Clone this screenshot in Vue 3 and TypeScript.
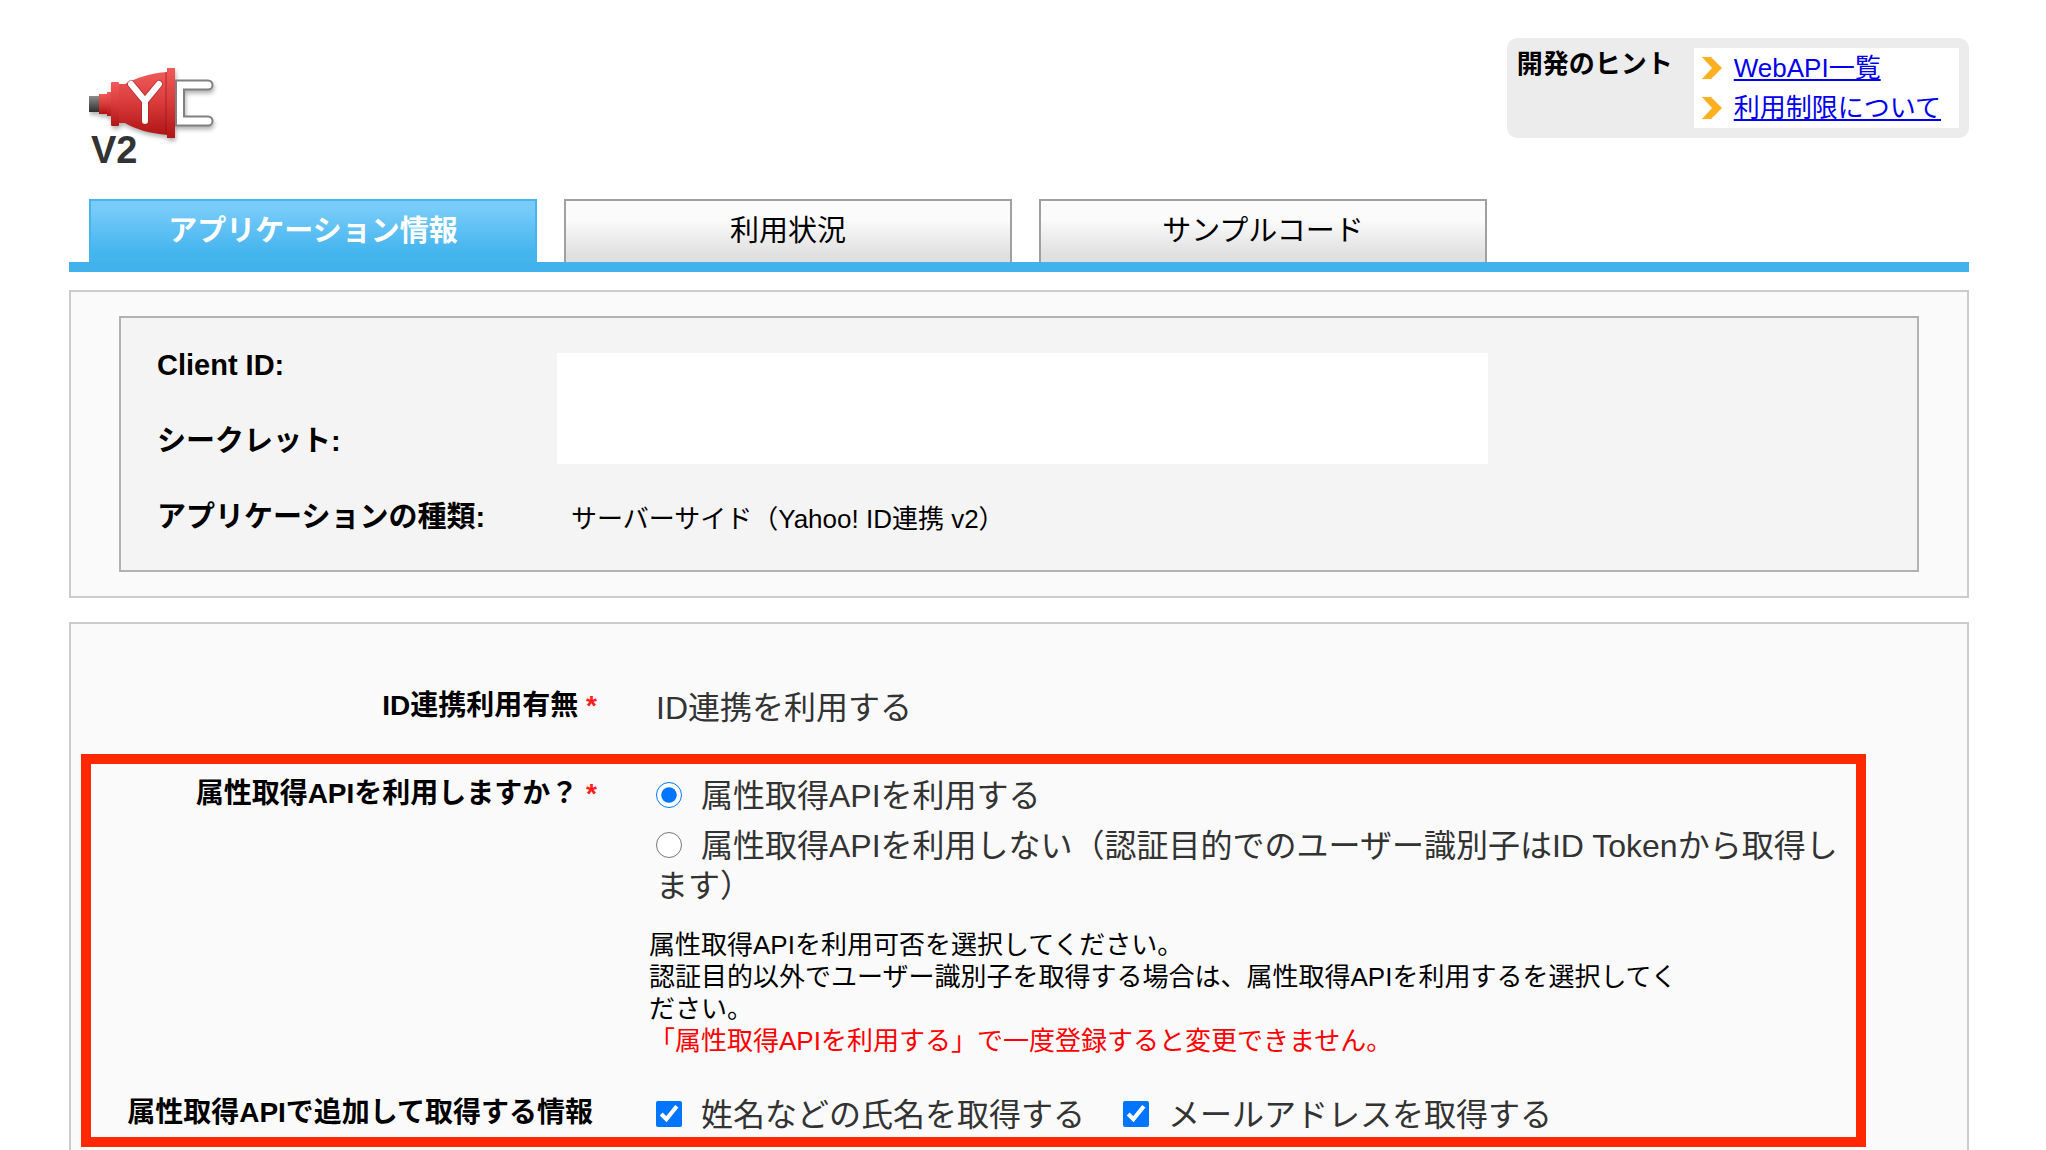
<script setup lang="ts">
import { ref } from 'vue'

interface Tab {
  label: string
  href: string
  active: boolean
}

interface Hint {
  label: string
  href: string
}

const hints: Hint[] = [
  { label: 'WebAPI一覧', href: '#webapi' },
  { label: '利用制限について', href: '#limits' },
]

const tabs: Tab[] = [
  { label: 'アプリケーション情報', href: '#info', active: true },
  { label: '利用状況', href: '#usage', active: false },
  { label: 'サンプルコード', href: '#sample', active: false },
]

const useAttributeApi = ref<'yes' | 'no'>('yes')
const fetchName = ref(true)
const fetchMail = ref(true)
</script>

<template>
  <div class="page">
    <header class="header">
      <svg class="logo" viewBox="0 0 130 105" role="img" aria-label="Yahoo! ID連携 V2">
        <defs>
          <linearGradient id="plugRed" x1="0" y1="0" x2="0" y2="1">
            <stop offset="0" stop-color="#f05a5a" />
            <stop offset="0.5" stop-color="#d83a3a" />
            <stop offset="1" stop-color="#b01414" />
          </linearGradient>
          <linearGradient id="cableGray" x1="0" y1="0" x2="0" y2="1">
            <stop offset="0" stop-color="#8c8c8c" />
            <stop offset="1" stop-color="#2e2e2e" />
          </linearGradient>
        </defs>
        <g class="plug">
          <rect x="0" y="30" width="11" height="16" fill="url(#cableGray)" />
          <rect x="10" y="28" width="9" height="20" fill="url(#plugRed)" />
          <rect x="18" y="26" width="5" height="24" fill="url(#plugRed)" />
          <path d="M29 18H36C48 12 60 7 79 6V69C60 67 48 64 36 57H29Z" fill="url(#plugRed)" />
          <rect x="22" y="16" width="8" height="44" rx="1" fill="url(#plugRed)" />
          <rect x="76" y="6" width="2" height="62" fill="#9c1010" opacity="0.35" />
          <rect x="78" y="2" width="8" height="70" fill="url(#plugRed)" />
          <path
            d="M87 14.5H119A4.5 4.5 0 0 1 119 23.5H95V50.5H119A4.5 4.5 0 0 1 119 59.5H87Z"
            fill="#fff"
            stroke="#808080"
            stroke-width="2"
          />
        </g>
        <path
          d="M42 18L56 35L70 18M56 35V55"
          fill="none"
          stroke="#a02020"
          stroke-width="8"
          stroke-linecap="round"
          stroke-linejoin="round"
          opacity="0.5"
        />
        <path
          d="M42 18L56 35L70 18M56 35V55"
          fill="none"
          stroke="#fff"
          stroke-width="6"
          stroke-linecap="round"
          stroke-linejoin="round"
        />
        <text class="version" x="2" y="97">V2</text>
      </svg>

      <aside class="hints">
        <h2 class="hints-title">開発のヒント</h2>
        <ul class="hints-list">
          <li v-for="hint in hints" :key="hint.href">
            <svg class="chevron" viewBox="0 0 20 22" aria-hidden="true">
              <path d="M0 0H9L20 11L9 22H0L10 11Z" fill="#ffb020" />
            </svg>
            <a :href="hint.href">{{ hint.label }}</a>
          </li>
        </ul>
      </aside>
    </header>

    <nav class="tabs">
      <a
        v-for="tab in tabs"
        :key="tab.href"
        class="tab"
        :class="{ active: tab.active }"
        :href="tab.href"
        >{{ tab.label }}</a
      >
    </nav>

    <section class="panel credentials-panel">
      <dl class="credentials">
        <dt>Client ID:</dt>
        <dt>シークレット:</dt>
        <dd class="secret"></dd>
        <dt>アプリケーションの種類:</dt>
        <dd class="kind">サーバーサイド（Yahoo! ID連携 v2）</dd>
      </dl>
    </section>

    <form class="panel settings" @submit.prevent>
      <div class="row intro">
        <div class="label">ID連携利用有無 <span class="required">*</span></div>
        <div class="field">ID連携を利用する</div>
      </div>

      <div class="highlight">
        <div class="row" role="radiogroup" aria-labelledby="attribute-label">
          <div id="attribute-label" class="label">
            属性取得APIを利用しますか？ <span class="required">*</span>
          </div>
          <div>
            <div class="field options">
              <div>
                <input id="use-yes" v-model="useAttributeApi" type="radio" name="use" value="yes" />
                <label for="use-yes">属性取得APIを利用する</label>
              </div>
              <div>
                <input id="use-no" v-model="useAttributeApi" type="radio" name="use" value="no" />
                <label for="use-no"
                  >属性取得APIを利用しない（認証目的でのユーザー識別子はID Tokenから取得します）</label
                >
              </div>
            </div>
            <p class="help">
              属性取得APIを利用可否を選択してください。<br />認証目的以外でユーザー識別子を取得する場合は、属性取得APIを利用するを選択してください。<br /><span
                class="warning"
                >「属性取得APIを利用する」で一度登録すると変更できません。</span
              >
            </p>
          </div>
        </div>

        <div class="row" role="group" aria-labelledby="extra-label">
          <div id="extra-label" class="label optional">属性取得APIで追加して取得する情報</div>
          <div class="field checks">
            <div>
              <input id="fetch-name" v-model="fetchName" type="checkbox" />
              <label for="fetch-name">姓名などの氏名を取得する</label>
            </div>
            <div>
              <input id="fetch-mail" v-model="fetchMail" type="checkbox" />
              <label for="fetch-mail">メールアドレスを取得する</label>
            </div>
          </div>
        </div>
      </div>
    </form>
  </div>
</template>

<style>
body {
  margin: 0;
  background: #fff;
}
</style>

<style scoped>
.page {
  box-sizing: border-box;
  display: flex;
  flex-direction: column;
  min-height: 100vh;
  padding: 38px 77px 0 69px;
  color: #000;
  font-family: "Liberation Sans", "Noto Sans CJK JP", sans-serif;
  font-size: 26px;
  line-height: 40px;
}

.header {
  display: flex;
  align-items: flex-start;
  justify-content: space-between;
  padding-bottom: 28px;
}

.logo {
  display: block;
  width: 130px;
  height: 105px;
  margin: 28px 0 0 20px;
}

.plug {
  filter: drop-shadow(1px 3px 2px rgba(0, 0, 0, 0.3));
}

.version {
  fill: #333;
  font-size: 38px;
  font-weight: bold;
}

.hints {
  display: flex;
  gap: 21px;
  padding: 10px;
  border-radius: 10px;
  background: #ececec;
}

.hints-title {
  margin: 0;
  font-size: 26px;
  line-height: 32px;
}

.hints-list {
  margin: 0;
  padding: 0 18px 0 8px;
  background: #fff;
  list-style: none;
}

.hints-list li {
  display: flex;
  align-items: center;
  gap: 12px;
}

.hints-list a {
  color: #00e;
}

.chevron {
  width: 20px;
  height: 22px;
}

.tabs {
  display: flex;
  gap: 27px;
  padding: 0 20px;
  border-bottom: 10px solid #41b2ec;
}

.tab {
  box-sizing: border-box;
  flex: 0 1 448px;
  padding: 10px 0 11px;
  border: 2px solid #a0a0a0;
  border-bottom: 0;
  background: linear-gradient(#fbfbfb 30%, #e0e0e0 88%);
  color: #000;
  font-size: 29px;
  text-align: center;
  text-decoration: none;
}

.tab.active {
  border-color: #45b5ef;
  background: linear-gradient(#79ccf9 10%, #44b4ed 85%);
  color: #fff;
  font-weight: bold;
}

.panel {
  border: 2px solid #ccc;
  background: #fafafa;
}

.credentials-panel {
  margin-top: 18px;
  padding: 24px 48px;
}

.credentials {
  display: grid;
  grid-template-columns: 400px 1fr;
  grid-template-rows: repeat(3, 76px);
  margin: 0;
  padding: 9px 36px 15px;
  border: 2px solid #b2b2b2;
  background: #f4f4f4;
}

.credentials dt {
  grid-column: 1;
  font-size: 29px;
  font-weight: bold;
  line-height: 76px;
}

.credentials dd {
  grid-column: 2;
  margin: 0;
}

.credentials .secret {
  grid-row: 1 / 3;
  max-width: 931px;
  margin: 26px 0 15px;
  background: #fff;
}

.credentials .kind {
  padding-left: 14px;
  line-height: 80px;
}

.settings {
  flex: 1;
  margin-top: 24px;
  border-bottom: 0;
}

.row {
  display: grid;
  grid-template-columns: 506px 1fr;
  column-gap: 52px;
}

.intro {
  padding: 60px 0 26px 20px;
}

.label {
  padding-top: 2px;
  font-size: 28px;
  font-weight: bold;
  text-align: right;
}

.label.optional {
  padding-right: 4px;
}

.required {
  color: #ff1c1c;
}

.field {
  padding: 4px 0 0 7px;
  color: #333;
  font-size: 32px;
}

.highlight {
  display: grid;
  row-gap: 34px;
  margin: 0 101px 0 10px;
  padding: 8px 0 2px;
  border: 10px solid #ff2800;
}

.options {
  display: grid;
  row-gap: 10px;
}

.checks {
  display: flex;
  gap: 38px;
}

.field input {
  width: 26px;
  height: 26px;
  margin: 0 19px 0 0;
  vertical-align: -1px;
}

.help {
  max-width: 1040px;
  margin: 23px 0 0;
  line-height: 32px;
}

.warning {
  color: #f00;
}
</style>
